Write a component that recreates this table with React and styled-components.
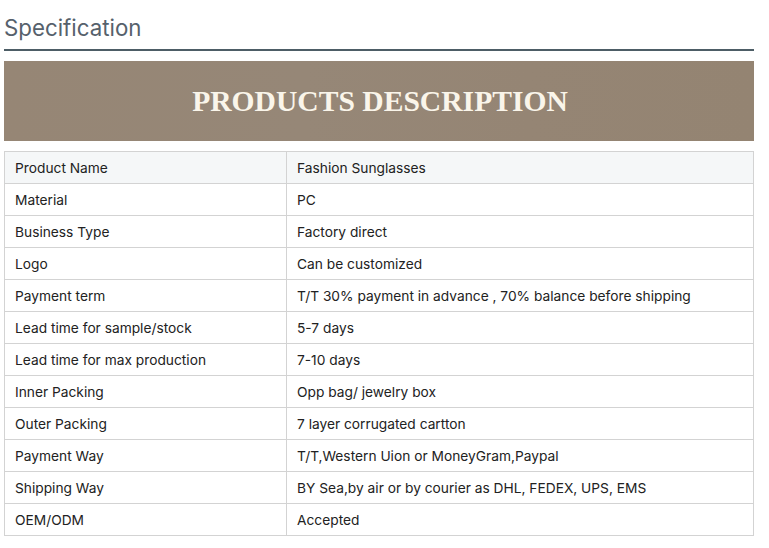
import React from "react";
import styled, { createGlobalStyle } from "styled-components";

const GlobalStyle = createGlobalStyle`
  body {
    margin: 0;
    background: #ffffff;
    font-family: "Inter", "Roboto", sans-serif;
  }
`;

const Page = styled.div`
  width: 750px;
  padding: 12px 0 0 4px;
`;

const Title = styled.h2`
  margin: 0;
  padding-bottom: 6px;
  border-bottom: 2px solid #4d5d66;
  font-family: "Inter", sans-serif;
  font-weight: 400;
  font-size: 22.3px;
  line-height: 31px;
  color: #56616c;
`;

const Banner = styled.div`
  display: flex;
  align-items: center;
  justify-content: center;
  height: 80px;
  margin-top: 10px;
  background: linear-gradient(90deg, #968675 0%, #968777 40%, #958574 70%, #948472 100%);
`;

const BannerText = styled.h1`
  margin: 0;
  padding-left: 2px;
  font-family: "Liberation Serif", "Times New Roman", serif;
  font-weight: 700;
  font-size: 29.6px;
  color: #faf5ea;
`;

const Table = styled.table`
  width: 750px;
  margin-top: 10px;
  border-collapse: collapse;
  table-layout: fixed;
`;

const Row = styled.tr`
  background: ${(p) => (p.$head ? "#f5f7f8" : "#ffffff")};
`;

const Cell = styled.td`
  height: 31px;
  padding: 0 0 0 10px;
  border: 1px solid #d3d3d3;
  font-family: "Inter", sans-serif;
  font-size: 13.75px;
  color: #222;
  white-space: nowrap;
`;

const rows = [
  ["Product Name", "Fashion Sunglasses"],
  ["Material", "PC"],
  ["Business Type", "Factory direct"],
  ["Logo", "Can be customized"],
  ["Payment term", "T/T 30% payment in advance , 70% balance before shipping"],
  ["Lead time for sample/stock", "5-7 days"],
  ["Lead time for max production", "7-10 days"],
  ["Inner Packing", "Opp bag/ jewelry box"],
  ["Outer Packing", "7 layer corrugated cartton"],
  ["Payment Way", "T/T,Western Uion or MoneyGram,Paypal"],
  ["Shipping Way", "BY Sea,by air or by courier as DHL, FEDEX, UPS, EMS"],
  ["OEM/ODM", "Accepted"],
];

export default function App() {
  return (
    <>
      <GlobalStyle />
      <Page>
        <Title>Specification</Title>
        <Banner>
          <BannerText>PRODUCTS DESCRIPTION</BannerText>
        </Banner>
        <Table>
          <colgroup>
            <col style={{ width: "282px" }} />
            <col />
          </colgroup>
          <tbody>
            {rows.map(([k, v], i) => (
              <Row key={k} $head={i === 0}>
                <Cell>{k}</Cell>
                <Cell>{v}</Cell>
              </Row>
            ))}
          </tbody>
        </Table>
      </Page>
    </>
  );
}
